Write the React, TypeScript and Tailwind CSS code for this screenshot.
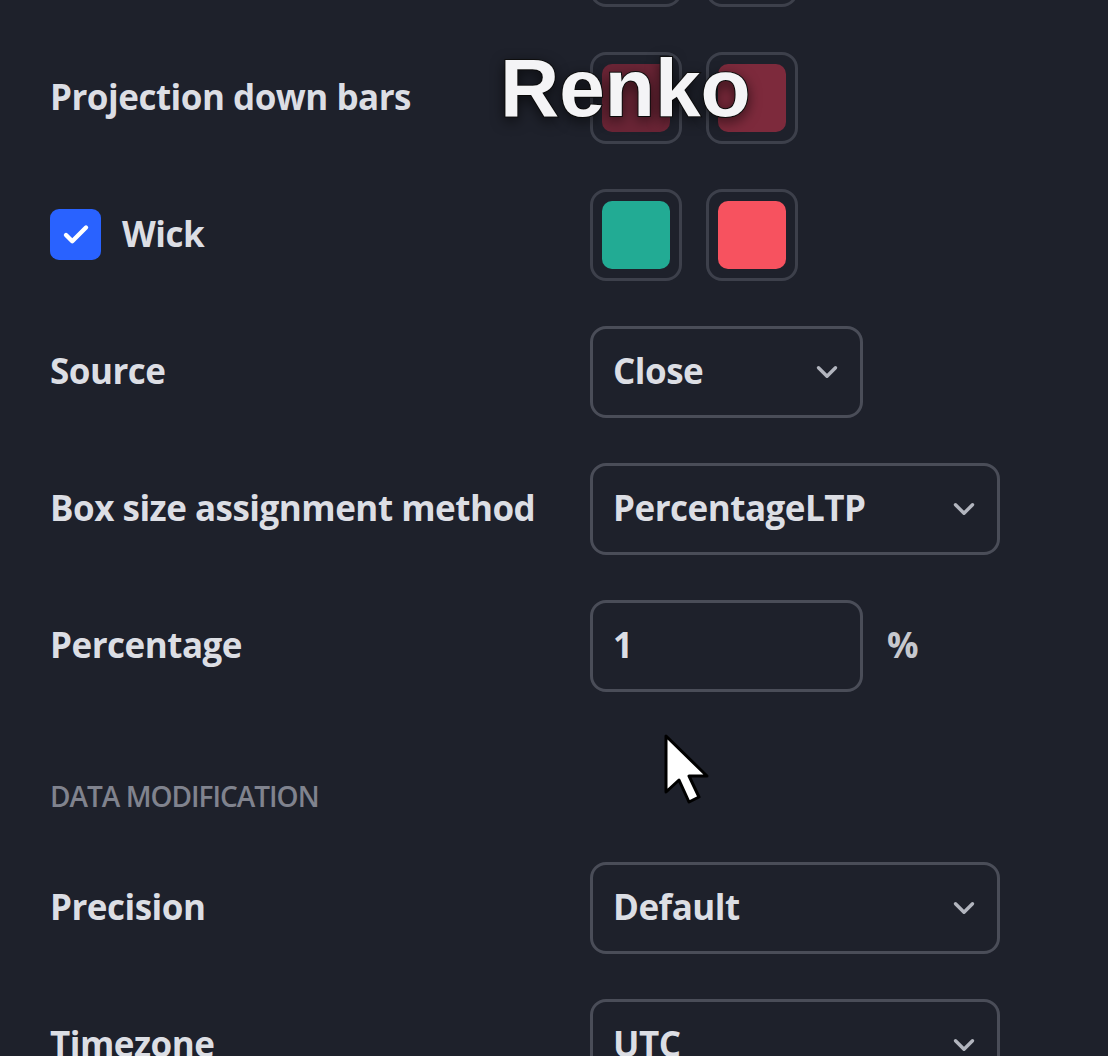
import { ChevronDown, Check } from 'lucide-react';

const font = { fontFamily: '"Open Sans", "Noto Sans", sans-serif' };

function Swatch({ color }: { color: string }) {
  return (
    <div className="w-[92px] h-[92px] rounded-[16px] border-[3px] border-[#3d404b] flex items-center justify-center">
      <div className="w-[68px] h-[68px] rounded-[10px]" style={{ background: color }} />
    </div>
  );
}

function Select({ value, wide }: { value: string; wide?: boolean }) {
  return (
    <div className={`${wide ? 'w-[410px]' : 'w-[273px]'} h-[92px] rounded-[16px] border-[3px] border-[#4a4d58] flex items-center justify-between pl-[20px] pr-[16px]`}>
      <span className="text-[35px] font-bold text-[#dcdee4] tracking-[-0.5px]">{value}</span>
      <ChevronDown size={34} strokeWidth={2.4} className="text-[#b2b5be]" />
    </div>
  );
}

function Row({ label, children }: { label: React.ReactNode; children: React.ReactNode }) {
  return (
    <div className="h-[137px] flex items-center shrink-0">
      <div className="w-[540px] text-[35px] font-bold text-[#dcdee4] tracking-[-0.5px]">{label}</div>
      <div className="flex items-center gap-[24px]">{children}</div>
    </div>
  );
}

export default function App() {
  return (
    <div className="w-[1108px] h-[1056px] bg-[#1e212b] overflow-hidden relative" style={font}>
      <div className="flex flex-col pl-[50px] -mt-[108px]">
        <Row label="">
          <Swatch color="#1f4d48" />
          <Swatch color="#5a2733" />
        </Row>
        <Row label="Projection down bars">
          <Swatch color="#6b2536" />
          <Swatch color="#7d2a3c" />
        </Row>
        <Row
          label={
            <div className="flex items-center gap-[21px]">
              <div className="w-[51px] h-[51px] rounded-[9px] bg-[#2962ff] flex items-center justify-center">
                <Check size={30} strokeWidth={3.5} className="text-white" />
              </div>
              <span>Wick</span>
            </div>
          }
        >
          <Swatch color="#22ab94" />
          <Swatch color="#f7525f" />
        </Row>
        <Row label="Source">
          <Select value="Close" />
        </Row>
        <Row label="Box size assignment method">
          <Select value="PercentageLTP" wide />
        </Row>
        <Row label="Percentage">
          <div className="w-[273px] h-[92px] rounded-[16px] border-[3px] border-[#4a4d58] flex items-center pl-[20px]">
            <span className="text-[35px] font-bold text-[#dcdee4]">1</span>
          </div>
          <span className="text-[35px] font-bold text-[#c6c8ce]">%</span>
        </Row>
        <div className="h-[125px] flex items-end pb-[22px] shrink-0">
          <span className="text-[28px] font-semibold text-[#80838e] tracking-[-1px] uppercase">Data modification</span>
        </div>
        <Row label="Precision">
          <Select value="Default" wide />
        </Row>
        <Row label="Timezone">
          <Select value="UTC" wide />
        </Row>
      </div>

      <div
        className="absolute left-[500px] top-[47px] text-[82px] font-bold text-[#f4f4f6] leading-none"
        style={{
          fontFamily: '"Liberation Sans", Arial, sans-serif',
          WebkitTextStroke: '2px #111',
          paintOrder: 'stroke fill',
          textShadow: '0 4px 14px rgba(0,0,0,0.7)',
        }}
      >
        Renko
      </div>

      <svg className="absolute left-[660px] top-[730px]" width="60" height="80" viewBox="0 0 60 80">
        <path
          d="M6 6 L6 62 L19 50 L29 72 L39 67 L29 46 L47 46 Z"
          fill="#fff"
          stroke="#000"
          strokeWidth="3"
          strokeLinejoin="round"
        />
      </svg>
    </div>
  );
}
